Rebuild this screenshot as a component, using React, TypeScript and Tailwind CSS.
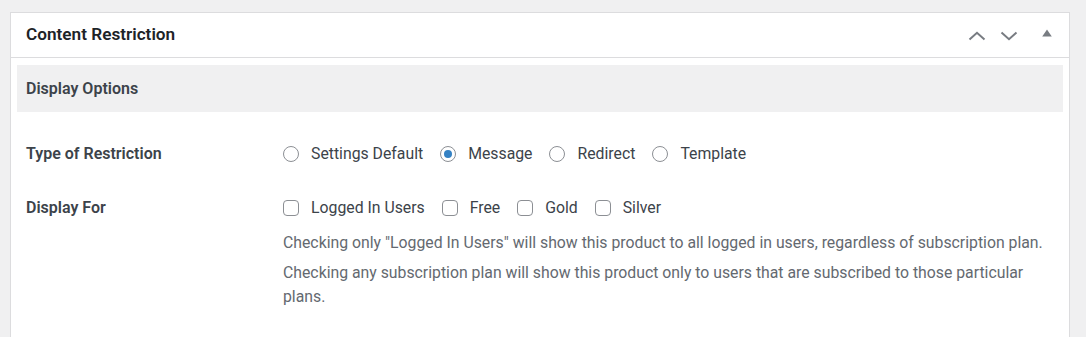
import React from 'react';

const Radio = ({ checked, label }: { checked?: boolean; label: string }) => (
    <label className="flex items-center">
        <span className="flex h-4 w-4 items-center justify-center rounded-full border border-[#8c8f94] bg-white">
            {checked && <span className="h-2 w-2 rounded-full bg-[#3582c4]" />}
        </span>
        <span className="ml-3 mr-[17px]">{label}</span>
    </label>
);

const Check = ({ label }: { label: string }) => (
    <label className="flex items-center">
        <span className="h-4 w-4 rounded-[4px] border border-[#8c8f94] bg-white" />
        <span className="ml-3 mr-[17px]">{label}</span>
    </label>
);

export default function App() {
    return (
        <div
            className="h-[337px] overflow-hidden bg-[#f0f0f1] pl-[10px] pr-[16px] pt-[12px] text-[#3c434a]"
            style={{ fontFamily: 'Roboto, "Noto Sans", sans-serif' }}
        >
            <div className="h-[400px] border border-[#dcdcde] bg-white">
                <div className="flex h-[45px] items-center justify-between border-b border-[#dcdcde] pl-[15px] pr-[17px]">
                    <h2 className="text-[17.2px] font-semibold text-[#1d2327]">Content Restriction</h2>
                    <div className="flex items-center text-[#787c82]">
                        <svg width="18" height="10" viewBox="0 0 18 10" className="mr-[14px] mt-[2px]">
                            <path d="M1.5 8.5 L9 1.8 L16.5 8.5" fill="none" stroke="currentColor" strokeWidth="2" />
                        </svg>
                        <svg width="18" height="10" viewBox="0 0 18 10" className="mr-[24px] mt-[2px]">
                            <path d="M1.5 1.5 L9 8.2 L16.5 1.5" fill="none" stroke="currentColor" strokeWidth="2" />
                        </svg>
                        <svg width="10" height="8" viewBox="0 0 10 8" className="mb-[4px]">
                            <path d="M5 0.5 L9.8 7.5 L0.2 7.5 Z" fill="currentColor" />
                        </svg>
                    </div>
                </div>
                <div className="px-[15px] pt-[7px] text-[15.8px]">
                    <div className="-mx-[9px] flex h-[47px] items-center bg-[#f0f0f1] px-[9px]">
                        <h3 className="text-[16px] font-semibold">Display Options</h3>
                    </div>
                    <div className="mt-[30px] flex leading-6">
                        <div className="w-[257px] shrink-0 text-[16px] font-semibold">Type of Restriction</div>
                        <div className="flex items-center">
                            <Radio label="Settings Default" />
                            <Radio checked label="Message" />
                            <Radio label="Redirect" />
                            <Radio label="Template" />
                        </div>
                    </div>
                    <div className="mt-[30px] flex leading-6">
                        <div className="w-[257px] shrink-0 text-[16px] font-semibold">Display For</div>
                        <div>
                            <div className="flex items-center">
                                <Check label="Logged In Users" />
                                <Check label="Free" />
                                <Check label="Gold" />
                                <Check label="Silver" />
                            </div>
                            <p className="mt-[11px] text-[#646970]">
                                Checking only "Logged In Users" will show this product to all logged in users, regardless of subscription plan.
                            </p>
                            <p className="mt-[6px] text-[#646970]">
                                Checking any subscription plan will show this product only to users that are subscribed to those particular plans.
                            </p>
                        </div>
                    </div>
                </div>
            </div>
        </div>
    );
}
